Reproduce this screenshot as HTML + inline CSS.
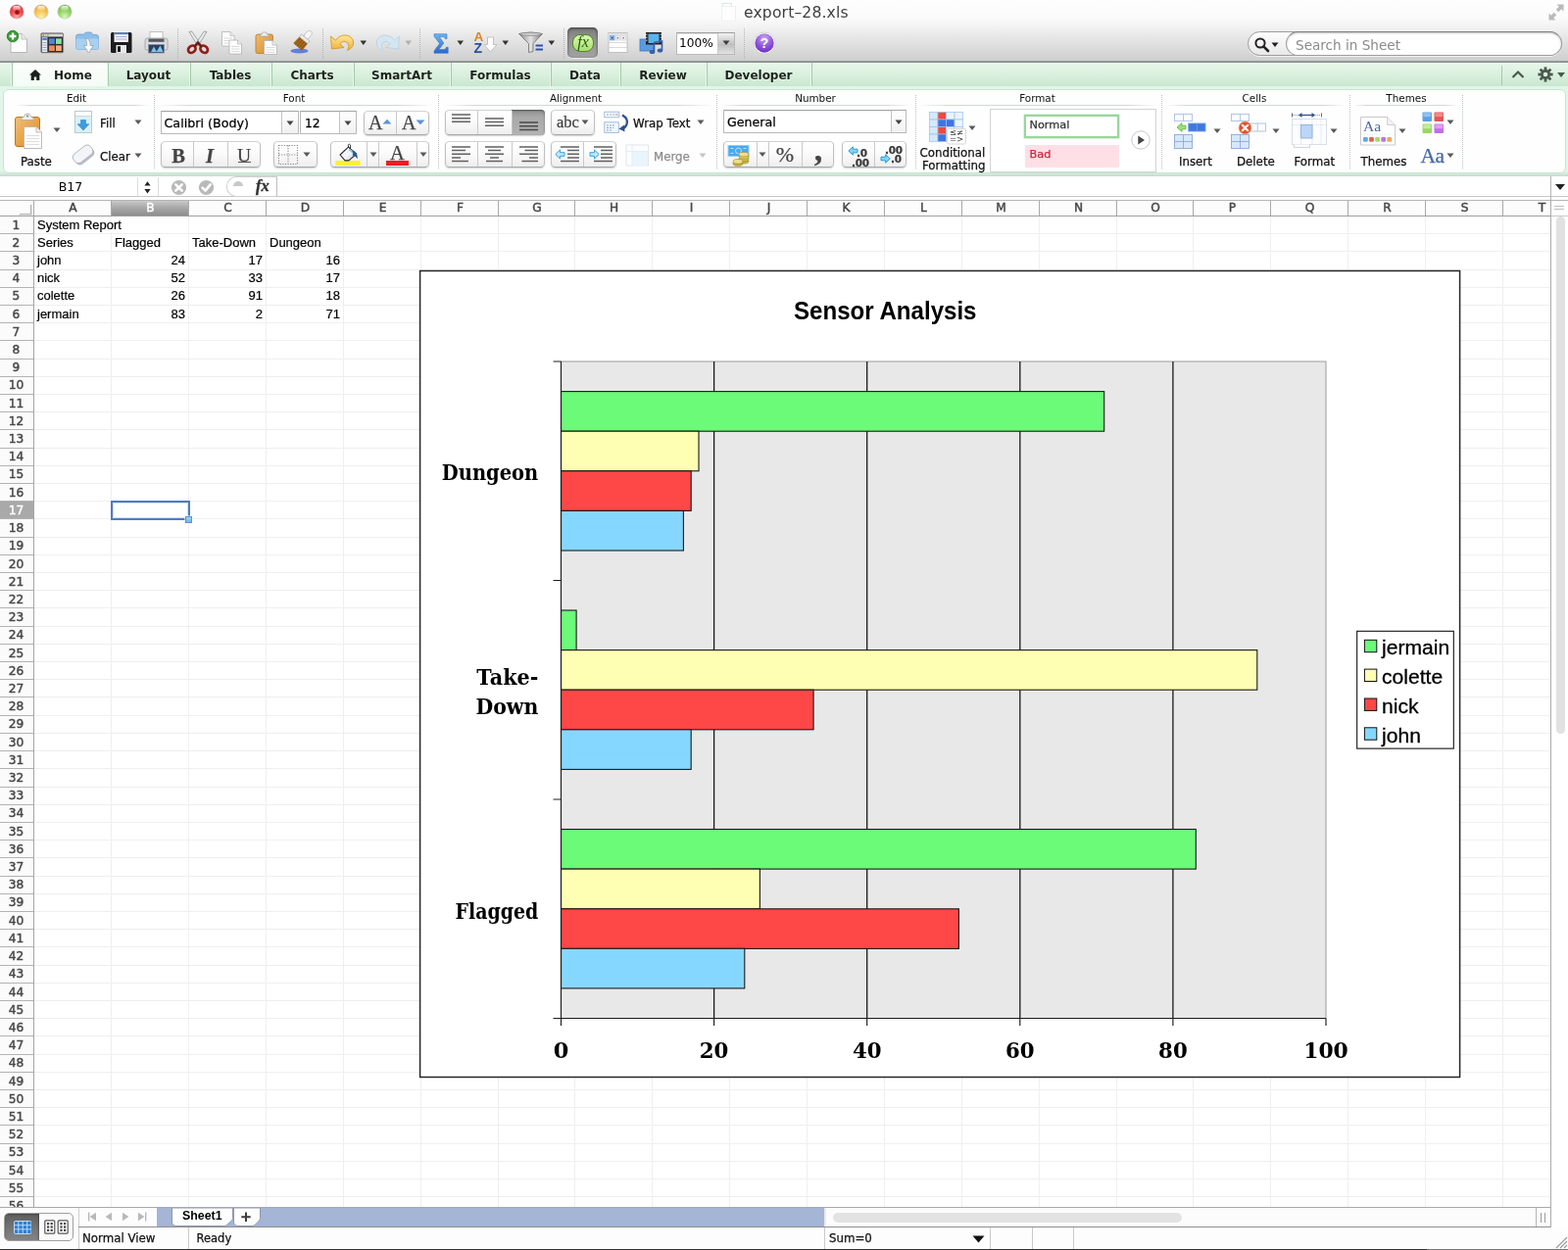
<!DOCTYPE html>
<html lang="en">
<head>
<meta charset="utf-8">
<title>export-28.xls</title>
<style>
html,body{margin:0;padding:0;}
body{width:1600px;height:1276px;position:relative;overflow:hidden;background:#fff;
  font-family:"DejaVu Sans","Liberation Sans",sans-serif;font-size:12px;color:#111;}
#app{left:0;top:0;width:1600px;height:1276px;overflow:hidden;background:#fff;will-change:transform;}
div,span,svg{position:absolute;box-sizing:border-box;}
.t{white-space:nowrap;line-height:1;}
/* title + toolbar */
#chrome{left:0;top:0;width:1600px;height:63px;
  background:linear-gradient(#fefefe 0px,#fbfbfb 18px,#f1f1f1 29px,#e5e5e5 40px,#dadada 51px,#cecece 62px);}
#chromeline{left:0;top:62px;width:1600px;height:2px;background:linear-gradient(#a3a3a3,#7f8a80);}
.tl{width:14px;height:14px;border-radius:7px;top:5px;}
/* tabs */
#tabs{left:0;top:64px;width:1600px;height:24px;background:linear-gradient(#e8f7ea,#daf0de 50%,#c9e7cf);}
.tab{top:0;height:24px;border-right:1px solid #a5c9ab;box-shadow:inset -1px 0 0 #e9f8ec;}
.tab .t{font-weight:bold;font-size:12px;color:#1a221a;top:7px;text-shadow:0 1px 0 rgba(255,255,255,.6);}
#ribbonbg{left:0;top:88px;width:1600px;height:92px;background:linear-gradient(#e2f5e9 0px,#e2f5e9 87px,#d3e9da 89.5px,#c6d9cc 92px);}
#ribbon{left:3px;top:91px;width:1595px;height:86px;background:#fdfefd;border:1px solid #c4e6d2;border-radius:6px;}
.gl{font-size:10.4px;color:#111;top:94.9px;}
.gsep{top:97px;width:0;height:75px;border-left:1px dotted #b9c4bc;}
.ghl{top:107px;height:1px;background:linear-gradient(90deg,rgba(200,205,200,0),#d4d8d4 12%,#d4d8d4 88%,rgba(200,205,200,0));}
.rl{-webkit-text-stroke:0.25px currentColor;margin-top:1px;}
.seg{border:1px solid #c0c0c0;border-top-color:#d2d2d2;border-bottom-color:#a9a9a9;border-radius:4.5px;background:linear-gradient(#ffffff,#fbfbfb 45%,#eeeeee);box-shadow:0 1px 1.5px rgba(0,0,0,.18);}
.combo{border:1px solid #b9b9b9;border-top-color:#a5a5a5;background:#fff;box-shadow:inset 0 1px 1px rgba(0,0,0,.08);}
/* formula bar */
#fbar{left:0;top:180px;width:1600px;height:24px;background:#fff;}
/* grid */
#colhdr{left:0;top:204px;width:1582px;height:17px;background:#fcfcfc;border-top:1px solid #b5b5b5;border-bottom:1px solid #9f9f9f;}
.ch{top:0;height:15px;border-right:1px solid #a9a9a9;}
.ch .t,.rh .t{font-size:12.2px;color:#484848;-webkit-text-stroke:0.45px #484848;}
#rowhdr{left:0;top:221px;width:35px;height:1012px;background:#fbfbfb;border-right:1px solid #a5a5a5;overflow:hidden;}
.rh{left:0;width:34px;border-bottom:1px solid #b3b3b3;}
#grid{left:35px;top:221px;width:1547px;height:1012px;overflow:hidden;background:#fff;}
.vl{top:0;width:1px;height:1012px;background:#efefef;}
.hl{left:0;width:1548px;height:1px;background:#efefef;}
.ch.sel{background:linear-gradient(#c9c9c9,#a9a9a9 45%,#8e8e8e);}
.ch.sel .t,.rh.sel .t{color:#fff;-webkit-text-stroke:0.4px #fff;}
.rh.sel{background:#a9a9a9;}
.c{font-family:"Liberation Sans",sans-serif;font-size:13px;color:#000;white-space:nowrap;line-height:1;-webkit-text-stroke:0.2px #000;}
</style>
</head>
<body>
<div id="app">
<div id="chrome"></div><div id="chromeline"></div>
<div class="tl" style="left:10px;background:radial-gradient(circle at 50% 85%,#ffb0a8 0%,#f0484e 45%,#c23a40 100%);box-shadow:0 0 0 0.5px rgba(0,0,0,.25),0 1px 1px rgba(255,255,255,.7)"><div style="left:3px;top:1px;width:8px;height:5px;border-radius:4px;background:linear-gradient(rgba(255,255,255,.85),rgba(255,255,255,.1))"></div></div>
<div class="tl" style="left:34.5px;background:radial-gradient(circle at 50% 85%,#fff0b0 0%,#f7c452 45%,#cf9a3a 100%);box-shadow:0 0 0 0.5px rgba(0,0,0,.25),0 1px 1px rgba(255,255,255,.7)"><div style="left:3px;top:1px;width:8px;height:5px;border-radius:4px;background:linear-gradient(rgba(255,255,255,.85),rgba(255,255,255,.1))"></div></div>
<div class="tl" style="left:59px;background:radial-gradient(circle at 50% 85%,#dcf6bc 0%,#93d465 45%,#6aa848 100%);box-shadow:0 0 0 0.5px rgba(0,0,0,.25),0 1px 1px rgba(255,255,255,.7)"><div style="left:3px;top:1px;width:8px;height:5px;border-radius:4px;background:linear-gradient(rgba(255,255,255,.85),rgba(255,255,255,.1))"></div></div>
<div style="left:14.5px;top:9.5px;width:5px;height:5px;border-radius:3px;background:radial-gradient(#8a0a10,#d0262c)"></div>
<div style="left:737px;top:3px;width:10px;height:3px;border:1px solid #d3efd6;border-bottom:0"></div>
<div style="left:736px;top:6px;width:15px;height:16px;background:#fdfdfd;border:1px solid #f0f0f0"></div>
<span class="t" style="left:759px;top:5.5px;font-size:15.6px;color:#3e3e3e;letter-spacing:0.15px">export–28.xls</span>
<svg style="left:1579px;top:3px" width="18" height="19" viewBox="0 0 18 19"><g fill="#b9b9b9"><path d="M9.5 1.5h7v7l-2.3-2.3-3 3-2.4-2.4 3-3z"/><path d="M8.5 17.5h-7v-7l2.3 2.3 3-3 2.4 2.4-3 3z"/></g></svg>
<div id="tabs">
<div class="tab" style="left:0;width:13px"></div>
<div class="tab" style="left:13px;width:98px;height:27px;background:linear-gradient(#fbfefb,#f4fbf5);border-right:1px solid #a9cdb0"><svg style="left:17px;top:7px" width="12" height="11" viewBox="0 0 12 11"><path d="M6 0 L12 5.6 H10.3 V11 H7.2 V7.4 H4.8 V11 H1.7 V5.6 H0 Z" fill="#1c211c"/></svg><span class="t" style="left:42px">Home</span></div>
<div class="tab" style="left:111px;width:84px"><span class="t" style="left:-1px;width:83px;text-align:center">Layout</span></div>
<div class="tab" style="left:195px;width:83px"><span class="t" style="left:-1px;width:82px;text-align:center">Tables</span></div>
<div class="tab" style="left:278px;width:84px"><span class="t" style="left:-1px;width:83px;text-align:center">Charts</span></div>
<div class="tab" style="left:362px;width:99px"><span class="t" style="left:-1px;width:98px;text-align:center">SmartArt</span></div>
<div class="tab" style="left:461px;width:102px"><span class="t" style="left:-1px;width:101px;text-align:center">Formulas</span></div>
<div class="tab" style="left:563px;width:71px"><span class="t" style="left:-1px;width:70px;text-align:center">Data</span></div>
<div class="tab" style="left:634px;width:88px"><span class="t" style="left:-1px;width:87px;text-align:center">Review</span></div>
<div class="tab" style="left:722px;width:107px"><span class="t" style="left:-1px;width:106px;text-align:center">Developer</span></div>
<div style="left:1532px;top:3px;width:1px;height:20px;background:#a5c9ab"></div>
<svg style="left:1542px;top:7px" width="14" height="10" viewBox="0 0 14 10"><path d="M1.5 8 L7 2.5 L12.5 8" fill="none" stroke="#4b5a4d" stroke-width="2.2"/></svg>
<svg style="left:1569px;top:4px" width="16" height="16" viewBox="-8 -8 16 16"><g fill="#4b5a4d"><circle r="5"/><rect x="-1.4" y="-7.6" width="2.8" height="4" transform="rotate(0)"/><rect x="-1.4" y="-7.6" width="2.8" height="4" transform="rotate(45)"/><rect x="-1.4" y="-7.6" width="2.8" height="4" transform="rotate(90)"/><rect x="-1.4" y="-7.6" width="2.8" height="4" transform="rotate(135)"/><rect x="-1.4" y="-7.6" width="2.8" height="4" transform="rotate(180)"/><rect x="-1.4" y="-7.6" width="2.8" height="4" transform="rotate(225)"/><rect x="-1.4" y="-7.6" width="2.8" height="4" transform="rotate(270)"/><rect x="-1.4" y="-7.6" width="2.8" height="4" transform="rotate(315)"/></g><circle r="2.3" fill="#d9efdc"/></svg>
<svg style="left:1589px;top:10px" width="8" height="5" viewBox="0 0 8 5"><path d="M0 0H8L4 5Z" fill="#4b5a4d"/></svg>
</div>
<div id="ribbonbg"></div><div id="ribbon"></div>
<span class="t gl" style="left:28px;width:100px;text-align:center">Edit</span>
<div class="gsep" style="left:157px"></div>
<div class="ghl" style="left:16px;width:137px"></div>
<span class="t gl" style="left:250px;width:100px;text-align:center">Font</span>
<div class="gsep" style="left:447px"></div>
<div class="ghl" style="left:161px;width:282px"></div>
<span class="t gl" style="left:537.5px;width:100px;text-align:center">Alignment</span>
<div class="gsep" style="left:731px"></div>
<div class="ghl" style="left:451px;width:276px"></div>
<span class="t gl" style="left:782px;width:100px;text-align:center">Number</span>
<div class="gsep" style="left:934px"></div>
<div class="ghl" style="left:735px;width:195px"></div>
<span class="t gl" style="left:1008.5px;width:100px;text-align:center">Format</span>
<div class="gsep" style="left:1185px"></div>
<div class="ghl" style="left:938px;width:243px"></div>
<span class="t gl" style="left:1230px;width:100px;text-align:center">Cells</span>
<div class="gsep" style="left:1377px"></div>
<div class="ghl" style="left:1189px;width:184px"></div>
<span class="t gl" style="left:1385px;width:100px;text-align:center">Themes</span>
<div class="gsep" style="left:1492px"></div>
<div class="ghl" style="left:1381px;width:107px"></div>

<svg style="left:6px;top:30px" width="24" height="26" viewBox="0 0 24 26"><path d="M5 4.5H16L21.5 10V23.5H5Z" fill="#fdfdfd" stroke="#b0b0b0" stroke-width="0.9"/><path d="M16 4.5V10H21.5" fill="#eaeaea" stroke="#b0b0b0" stroke-width="0.8"/>
<circle cx="7" cy="7" r="5.8" fill="#3a9a34" stroke="#2a7a26" stroke-width="0.8"/><path d="M7 3.6V10.4M3.6 7H10.4" stroke="#fff" stroke-width="2.3"/></svg>
<svg style="left:41px;top:33px" width="25" height="22" viewBox="0 0 25 22"><rect x="0.8" y="0.8" width="22.8" height="20" rx="1" fill="#2f2f33" stroke="#8a8a8a" stroke-width="0.8"/><rect x="1.5" y="1.5" width="21.5" height="3" fill="#d9d9d9"/>
<circle cx="3.3" cy="3" r="0.8" fill="#e0443a"/><circle cx="5.6" cy="3" r="0.8" fill="#e8b02c"/><circle cx="7.9" cy="3" r="0.8" fill="#4fb53c"/>
<rect x="1.8" y="5" width="5.5" height="15" fill="#e9edf5"/><rect x="2.3" y="5.5" width="4.5" height="2.6" fill="#4a7fd0"/><path d="M2.5 10.5h4M2.5 13h4M2.5 15.5h4M2.5 18h4" stroke="#9aa3b5" stroke-width="1"/>
<rect x="9" y="6.3" width="5.8" height="5.6" fill="#4f86d8"/><rect x="16" y="6.3" width="5.8" height="5.6" fill="#8ee0a0"/><rect x="9" y="13.4" width="5.8" height="5.6" fill="#f08a5a"/><rect x="16" y="13.4" width="5.8" height="5.6" fill="#f6b07a"/></svg>
<svg style="left:76px;top:32px" width="26" height="24" viewBox="0 0 26 24"><path d="M1.5 5.5Q1.5 3 4 3H9.5L11.5 1H17L19 3.5H22Q24.5 3.5 24.5 6V16.5Q24.5 18.5 22.5 18.5H3.5Q1.5 18.5 1.5 16.5Z" fill="#8fbfe8" stroke="#6fa0cf" stroke-width="0.8"/>
<path d="M1.5 7.5H24.5V16.5Q24.5 18.5 22.5 18.5H3.5Q1.5 18.5 1.5 16.5Z" fill="#a9d0f0"/>
<path d="M11 7Q16.5 8 16 14.5H19.3L14.5 22L9.5 14.5H12.6Q13 10 11 7Z" fill="#fdfdfd" stroke="#8a9aa8" stroke-width="0.7"/></svg>
<svg style="left:112px;top:32px" width="24" height="23" viewBox="0 0 24 23"><path d="M1 2.5Q1 1 2.5 1H21Q22.5 1 22.5 2.5V20.5Q22.5 22 21 22H2.5Q1 22 1 20.5Z" fill="#1c1c1e"/>
<rect x="4.5" y="1" width="14.5" height="10" fill="#f3f5f8"/><rect x="4.5" y="1" width="14.5" height="2.2" fill="#5c7fc0"/><path d="M6 5.5H17.5M6 8H17.5" stroke="#9fb0c8" stroke-width="1.1"/>
<rect x="6.5" y="14" width="10.5" height="8" fill="#e8e8ea"/><rect x="8" y="15.2" width="3" height="5.8" fill="#1c1c1e"/></svg>
<svg style="left:146px;top:31px" width="27" height="25" viewBox="0 0 27 25"><rect x="7" y="1.5" width="13" height="8" fill="#fdfdfd" stroke="#b5b5b5" stroke-width="0.8"/>
<path d="M2 10.5Q2 8 4.5 8H22.5Q25 8 25 10.5V18.5Q25 20 23.5 20H3.5Q2 20 2 18.5Z" fill="#d9dcde" stroke="#9a9d9f" stroke-width="0.8"/>
<rect x="5.5" y="8.6" width="16" height="3.2" fill="#55585c"/><rect x="5.5" y="14.5" width="16" height="8.5" fill="#2c3f66" stroke="#8c8f94" stroke-width="0.8"/><path d="M8 22L11 16.5L14 22M13.5 22L17.5 15.5L20.5 22" fill="#7ec6e8"/></svg>
<div style="left:181px;top:29px;width:0;height:31px;border-left:1px dotted #b3b3b3"></div>
<svg style="left:189px;top:31px" width="26" height="25" viewBox="0 0 26 25"><path d="M4 1.5L6.8 1L15.8 14.5L13 16Z M22 1.5L19.2 1L10.2 14.5L13 16Z" fill="#e9ebee" stroke="#8f9296" stroke-width="0.8" stroke-linejoin="round"/>
<ellipse cx="6.8" cy="19.3" rx="4.1" ry="3.3" fill="none" stroke="#8f1f18" stroke-width="2.7" transform="rotate(-40 6.8 19.3)"/><ellipse cx="19.2" cy="19.3" rx="4.1" ry="3.3" fill="none" stroke="#8f1f18" stroke-width="2.7" transform="rotate(40 19.2 19.3)"/>
<path d="M9.5 16.5L13 12.5L16.5 16.5" fill="none" stroke="#6e1812" stroke-width="2.4"/></svg>
<svg style="left:225px;top:31px" width="24" height="25" viewBox="0 0 24 25"><path d="M1.5 1.5H10L14 5.5V16H1.5Z" fill="#fdfdfd" stroke="#b3b3b3" stroke-width="0.8"/><path d="M10 1.5V5.5H14" fill="#ececec" stroke="#b3b3b3" stroke-width="0.7"/><path d="M3.5 8H12M3.5 10.5H12M3.5 13H12" stroke="#d6d6d6" stroke-width="0.9"/>
<path d="M9 10H17.5L21.5 14V24H9Z" fill="#fdfdfd" stroke="#b3b3b3" stroke-width="0.8"/><path d="M17.5 10V14H21.5" fill="#ececec" stroke="#b3b3b3" stroke-width="0.7"/><path d="M11 16.5H19.5M11 19H19.5M11 21.5H19.5" stroke="#d6d6d6" stroke-width="0.9"/></svg>
<svg style="left:260px;top:32px" width="24" height="24" viewBox="0 0 24 24"><defs><linearGradient id="tp1" x1="0" y1="0" x2="1" y2="1"><stop offset="0" stop-color="#f0bd78"/><stop offset="1" stop-color="#d48a22"/></linearGradient></defs>
<rect x="1" y="3" width="17.5" height="19.5" rx="2" fill="url(#tp1)" stroke="#b37a26" stroke-width="0.8"/><path d="M5 5Q5 3 7 3L7.7 1.3Q9.8 0.3 12 1.3L12.5 3Q14.5 3 14.5 5Z" fill="#eee" stroke="#a5a5a5" stroke-width="0.7"/>
<path d="M9.5 9.5H18L22.5 14V23.5H9.5Z" fill="#fdfdfd" stroke="#b3b3b3" stroke-width="0.8"/><path d="M18 9.5V14H22.5" fill="#ececec" stroke="#b3b3b3" stroke-width="0.7"/><path d="M11.5 16.5H20.5M11.5 19H20.5M11.5 21.5H20.5" stroke="#d6d6d6" stroke-width="0.9"/></svg>
<svg style="left:294px;top:31px" width="27" height="25" viewBox="0 0 27 25"><ellipse cx="11.5" cy="21" rx="9" ry="2.6" fill="#4a6fe0" opacity="0.85"/>
<g transform="rotate(40 14 12)"><rect x="11.2" y="-2.5" width="5.6" height="9" rx="2.6" fill="#f6f6f6" stroke="#b5b5b5" stroke-width="0.7"/><rect x="8.5" y="6" width="11" height="3.6" fill="#e9e9e9" stroke="#a9a9a9" stroke-width="0.6"/><path d="M8.5 9.6H19.5L20 18.5H8Z" fill="#a86a1c"/><path d="M10.5 9.6V18.5M13 9.6V18.5M15.5 9.6V18.5M18 9.6V18.5" stroke="#6e430f" stroke-width="0.7"/></g></svg>
<div style="left:329px;top:29px;width:0;height:31px;border-left:1px dotted #b3b3b3"></div>
<svg style="left:336px;top:34px" width="27" height="20" viewBox="0 0 27 20"><defs><linearGradient id="un1" x1="0" y1="0" x2="0" y2="1"><stop offset="0" stop-color="#ffe9a0"/><stop offset="1" stop-color="#f0b030"/></linearGradient></defs>
<path d="M1.5 3L2.5 16L15 14.5L10.8 11Q14 6.5 18.5 9.5Q21.5 12.5 18.5 17.5Q25.5 14.5 24.5 8Q22.5 1.5 15 2Q9.5 2.5 6.5 7.2Z" fill="url(#un1)" stroke="#d19a2a" stroke-width="0.9" stroke-linejoin="round"/></svg>
<svg style="left:367.2px;top:41.0px" width="7.5" height="5.5" viewBox="0 0 7.5 5.5"><path d="M0.5 0.5H7.0L3.75 5.0Z" fill="#333"/></svg>
<svg style="left:382px;top:34px" width="27" height="20" viewBox="0 0 27 20"><path d="M25.5 3L24.5 16L12 14.5L16.2 11Q13 6.5 8.5 9.5Q5.5 12.5 8.5 17.5Q1.5 14.5 2.5 8Q4.5 1.5 12 2Q17.5 2.5 20.5 7.2Z" fill="#d5e6f2" stroke="#b9d2e4" stroke-width="0.9" stroke-linejoin="round"/></svg>
<svg style="left:413.2px;top:41.0px" width="7.5" height="5.5" viewBox="0 0 7.5 5.5"><path d="M0.5 0.5H7.0L3.75 5.0Z" fill="#b0b0b0"/></svg>
<div style="left:428px;top:29px;width:0;height:31px;border-left:1px dotted #b3b3b3"></div>
<svg style="left:442px;top:33.5px" width="16" height="21" viewBox="0 0 16 21"><defs><linearGradient id="sg1" x1="0" y1="0" x2="0" y2="1"><stop offset="0" stop-color="#6fb7f4"/><stop offset="1" stop-color="#2a68c8"/></linearGradient></defs>
<path d="M1 0.8H14V5.5H12.3Q12 3.6 10.3 3.6H6.3L10.8 10L5.8 16.6H11Q13 16.6 13.5 14.2H15.2V20.2H1V18L6.6 10.5L1 3Z" fill="url(#sg1)" stroke="#2f6fc4" stroke-width="0.6"/></svg>
<svg style="left:466.2px;top:41.0px" width="7.5" height="5.5" viewBox="0 0 7.5 5.5"><path d="M0.5 0.5H7.0L3.75 5.0Z" fill="#333"/></svg>
<svg style="left:482px;top:31px" width="28" height="25" viewBox="0 0 28 25"><text x="1.5" y="10.5" font-family="'Liberation Sans',sans-serif" font-weight="bold" font-size="13.5" fill="#d6822a">A</text><text x="1.5" y="23" font-family="'Liberation Sans',sans-serif" font-weight="bold" font-size="14" fill="#2a4f9c">Z</text>
<path d="M15.5 7H21.5V14.5H25L18.5 22L12 14.5H15.5Z" fill="#fdfdfd" stroke="#b5b5b5" stroke-width="0.8"/></svg>
<svg style="left:512.2px;top:41.0px" width="7.5" height="5.5" viewBox="0 0 7.5 5.5"><path d="M0.5 0.5H7.0L3.75 5.0Z" fill="#333"/></svg>
<svg style="left:528px;top:32px" width="28" height="24" viewBox="0 0 28 24"><defs><linearGradient id="fl1" x1="0" y1="0" x2="1" y2="0"><stop offset="0" stop-color="#8a8a8a"/><stop offset="0.5" stop-color="#e4e4e4"/><stop offset="1" stop-color="#7a7a7a"/></linearGradient></defs>
<path d="M1.5 2.5Q13.5 -0.5 25.5 2.5L16 12.5V20.5L11.5 21.5V12.5Z" fill="url(#fl1)" stroke="#6e6e6e" stroke-width="0.8"/><ellipse cx="13.5" cy="2.8" rx="11" ry="1.6" fill="#cfcfcf" stroke="#777" stroke-width="0.6"/>
<path d="M18.5 14.6H26M18.5 18.4H26" stroke="#2f4fb8" stroke-width="2"/></svg>
<svg style="left:559.2px;top:41.0px" width="7.5" height="5.5" viewBox="0 0 7.5 5.5"><path d="M0.5 0.5H7.0L3.75 5.0Z" fill="#333"/></svg>
<div style="left:575px;top:29px;width:0;height:31px;border-left:1px dotted #b3b3b3"></div>
<div style="left:579px;top:28px;width:31px;height:31px;border-radius:5px;background:linear-gradient(#7b7b7b,#939393 40%,#a3a3a3);box-shadow:inset 0 1px 3px rgba(0,0,0,.55),0 1px 0 rgba(255,255,255,.5)"></div>
<div style="left:584px;top:34.5px;width:22px;height:18.5px;border-radius:8px;background:linear-gradient(#d9f6b0,#a8e06a);border:1px solid #4f8a2c"></div>
<span class="t" style="left:584px;width:22px;text-align:center;top:35px;font-family:'Liberation Serif',serif;font-style:italic;font-size:16px;color:#1f5a14">fx</span>
<svg style="left:620px;top:32px" width="22" height="23" viewBox="0 0 22 23"><rect x="1" y="1.5" width="19" height="20" fill="#fdfdfd" stroke="#b5b5b5" stroke-width="0.8"/><rect x="1.5" y="2" width="18" height="2" fill="#e2e2e2"/><rect x="2.5" y="4.5" width="4.5" height="4.5" fill="#7fb0e8" stroke="#5a8fd0" stroke-width="0.5"/><rect x="8.2" y="4.5" width="4.5" height="4.5" fill="#f4f4f4" stroke="#bbb" stroke-width="0.5"/><rect x="13.9" y="4.5" width="4.5" height="4.5" fill="#f4f4f4" stroke="#bbb" stroke-width="0.5"/>
<circle cx="4.7" cy="6.8" r="0.8" fill="#234"/><circle cx="10.4" cy="6.8" r="0.8" fill="#555"/><circle cx="16.1" cy="6.8" r="0.8" fill="#555"/><path d="M1 11.5H20M1 16.5H20" stroke="#cfcfcf" stroke-width="0.8"/></svg>
<svg style="left:651px;top:31px" width="28" height="26" viewBox="0 0 28 26"><rect x="2" y="9" width="14" height="12" fill="#5a9ae0" stroke="#3f78c0" stroke-width="0.8"/><rect x="8" y="2" width="16" height="12.5" fill="#1d1f24"/><rect x="10.5" y="3.5" width="11" height="9.5" fill="#5ab4ec"/><path d="M8.8 3.5v1.6M8.8 6.5v1.6M8.8 9.5v1.6M23.2 3.5v1.6M23.2 6.5v1.6M23.2 9.5v1.6" stroke="#ddd" stroke-width="1"/>
<path d="M16.5 21.5V12.5L24.5 11V20" fill="none" stroke="#3a5fa8" stroke-width="1.6"/><ellipse cx="14.5" cy="22" rx="2.8" ry="2.1" fill="#3a5fa8"/><ellipse cx="22.5" cy="20.5" rx="2.8" ry="2.1" fill="#3a5fa8"/></svg>
<div style="left:690px;top:33px;width:60px;height:22.5px;background:#fff;border:1px solid #b9b9b9;border-top-color:#9f9f9f;box-shadow:inset 0 1px 1px rgba(0,0,0,.12)"><div style="left:41px;top:0;width:17px;height:20.5px;background:linear-gradient(#f2f2f2,#bfbfbf 55%,#e2e2e2);border-left:1px solid #c9c9c9"></div></div>
<span class="t" style="left:693px;top:38px;font-size:12.2px;color:#000">100%</span>
<svg style="left:737.0px;top:40.8px" width="8" height="5.5" viewBox="0 0 8 5.5"><path d="M0.5 0.5H7.5L4.0 5.0Z" fill="#3c3c3c"/></svg>
<div style="left:759px;top:29px;width:0;height:31px;border-left:1px dotted #b3b3b3"></div>
<svg style="left:768px;top:32px" width="24" height="24" viewBox="0 0 24 24"><defs><radialGradient id="hp1" cx="0.5" cy="0.25" r="0.8"><stop offset="0" stop-color="#c9a6f2"/><stop offset="0.6" stop-color="#8a4fd8"/><stop offset="1" stop-color="#6a2fc0"/></radialGradient></defs>
<circle cx="12" cy="12" r="11" fill="#fdfdfd" stroke="#c9c9c9" stroke-width="0.7"/><circle cx="12" cy="12" r="9.7" fill="url(#hp1)"/><text x="12" y="17" text-anchor="middle" font-family="'Liberation Sans',sans-serif" font-weight="bold" font-size="14.5" fill="#fff">?</text></svg>
<div style="left:1273px;top:32px;width:321px;height:25px;border-radius:12.5px;border:1px solid #9c9c9c;background:linear-gradient(#fdfdfd,#e9e9e9);box-shadow:0 1px 0 rgba(255,255,255,.7)"></div>
<div style="left:1312px;top:32px;width:282px;height:25px;border-radius:12.5px;border:1px solid #9c9c9c;border-top-color:#7f7f7f;background:#fff;box-shadow:inset 0 1px 2px rgba(0,0,0,.25)"></div>
<svg style="left:1279px;top:36.7px" width="18" height="17" viewBox="0 0 18 17"><circle cx="7" cy="7" r="4.6" fill="none" stroke="#222" stroke-width="2"/><path d="M10.3 10.3L15 15" stroke="#222" stroke-width="2.6" stroke-linecap="round"/></svg>
<svg style="left:1296.5px;top:42.8px" width="8" height="5.5" viewBox="0 0 8 5.5"><path d="M0.5 0.5H7.5L4.0 5.0Z" fill="#222"/></svg>
<span class="t" style="left:1322px;top:39.5px;font-size:13.6px;color:#8a8a8a">Search in Sheet</span>
<svg style="left:14px;top:115px" width="32" height="38" viewBox="0 0 32 38"><defs><linearGradient id="pg1" x1="0" y1="0" x2="1" y2="1"><stop offset="0" stop-color="#f3c07a"/><stop offset="1" stop-color="#d98a1c"/></linearGradient></defs>
<rect x="1.5" y="4.5" width="25" height="30" rx="2.5" fill="url(#pg1)" stroke="#b9781f" stroke-width="1"/>
<path d="M7.5 7.5Q7.5 4.5 10.5 4.2L11.5 1.8Q14 0.3 16.5 1.8L17.5 4.2Q20.5 4.5 20.5 7.5Z" fill="#efefef" stroke="#a8a8a8" stroke-width="0.8"/>
<circle cx="14" cy="3.6" r="1" fill="#777"/>
<path d="M10.5 14.5H23L28.5 20V36.5H10.5Z" fill="#fdfdfd" stroke="#b5b5b5" stroke-width="0.9"/>
<path d="M23 14.5V20H28.5" fill="#ececec" stroke="#b5b5b5" stroke-width="0.8"/>
<path d="M13 23.5H26M13 26.5H26M13 29.5H26M13 32.5H26" stroke="#d9d9d9" stroke-width="0.9"/></svg>
<svg style="left:53.5px;top:130.4px" width="8" height="5.5" viewBox="0 0 8 5.5"><path d="M0.5 0.5H7.5L4.0 5.0Z" fill="#5a5a5a"/></svg>
<span class="t rl" style="left:21px;top:159px;font-size:11.8px;color:#111;">Paste</span>
<svg style="left:75px;top:113px" width="20" height="23" viewBox="0 0 20 23"><rect x="1.5" y="0.5" width="17" height="22" fill="#d9f0fb" stroke="#b9c9d3" stroke-width="1"/>
<rect x="2" y="1" width="16" height="4.5" fill="#fff"/><path d="M1.5 5.5H18.5" stroke="#c5d0d6" stroke-width="0.8"/>
<path d="M7.5 9.5h5v4.2h3.3L10 20 4.2 13.7h3.3z" fill="#3d9be0" stroke="#2b83c8" stroke-width="0.6"/></svg>
<span class="t rl" style="left:102px;top:120px;font-size:11.8px;color:#111;">Fill</span>
<svg style="left:136.5px;top:122.2px" width="8" height="5.5" viewBox="0 0 8 5.5"><path d="M0.5 0.5H7.5L4.0 5.0Z" fill="#5a5a5a"/></svg>
<svg style="left:73px;top:147px" width="25" height="23" viewBox="0 0 25 23"><g transform="rotate(-38 12.5 11.5)"><rect x="1.5" y="6" width="22" height="12" rx="4.5" fill="#b9bcc8"/><rect x="1.5" y="4.5" width="22" height="11" rx="4.5" fill="#f3f4f8" stroke="#a7abb8" stroke-width="0.8"/></g></svg>
<span class="t rl" style="left:102px;top:154px;font-size:11.8px;color:#111;">Clear</span>
<svg style="left:136.5px;top:156.2px" width="8" height="5.5" viewBox="0 0 8 5.5"><path d="M0.5 0.5H7.5L4.0 5.0Z" fill="#5a5a5a"/></svg>
<div class="combo" style="left:164px;top:113px;width:141px;height:24px"><div style="left:122px;top:0;width:17px;height:22px;border-left:1px solid #c3c3c3;background:linear-gradient(#fefefe,#f1f1f1)"></div></div>
<span class="t rl" style="left:167.5px;top:119px;font-size:12.7px;color:#000;">Calibri (Body)</span>
<svg style="left:292.0px;top:122.8px" width="8" height="5.5" viewBox="0 0 8 5.5"><path d="M0.5 0.5H7.5L4.0 5.0Z" fill="#444"/></svg>
<div class="combo" style="left:306px;top:113px;width:58px;height:24px"><div style="left:39px;top:0;width:17px;height:22px;border-left:1px solid #c3c3c3;background:linear-gradient(#fefefe,#f1f1f1)"></div></div>
<span class="t rl" style="left:311px;top:119px;font-size:12.3px;color:#000;">12</span>
<svg style="left:351.0px;top:122.8px" width="8" height="5.5" viewBox="0 0 8 5.5"><path d="M0.5 0.5H7.5L4.0 5.0Z" fill="#444"/></svg>
<div class="seg" style="left:370.5px;top:113px;width:67.0px;height:25px">
<div style="left:32.0px;top:0;width:1px;height:23px;background:#c9c9c9"></div>
</div>
<span class="t rl" style="left:376px;top:114px;font-size:20px;color:#444;font-family:'Liberation Serif',serif">A</span>
<span class="t rl" style="left:410px;top:114px;font-size:20px;color:#444;font-family:'Liberation Serif',serif">A</span>
<svg style="left:390px;top:121px" width="10" height="6" viewBox="0 0 10 6"><path d="M0.5 5.5L5 0.8L9.5 5.5Z" fill="#5b93d8"/></svg>
<svg style="left:424px;top:122px" width="10" height="6" viewBox="0 0 10 6"><path d="M0.5 0.5L5 5.2L9.5 0.5Z" fill="#5b93d8"/></svg>
<div class="seg" style="left:164px;top:144px;width:102px;height:27px">
<div style="left:32px;top:0;width:1px;height:25px;background:#c9c9c9"></div>
<div style="left:67px;top:0;width:1px;height:25px;background:#c9c9c9"></div>
</div>
<span class="t rl" style="left:172px;top:147.5px;font-size:20.5px;color:#444;font-family:'Liberation Serif',serif;font-weight:bold;width:20px;text-align:center">B</span>
<span class="t rl" style="left:204px;top:147.5px;font-size:20.5px;color:#444;font-family:'Liberation Serif',serif;font-weight:bold;font-style:italic;width:20px;text-align:center">I</span>
<span class="t rl" style="left:239px;top:147.5px;font-size:19.5px;color:#444;font-family:'Liberation Serif',serif;width:20px;text-align:center">U</span>
<div style="left:242.5px;top:164.6px;width:13px;height:1.3px;background:#555"></div>
<div class="seg" style="left:279px;top:144px;width:45px;height:27px">
</div>
<svg style="left:283px;top:147px" width="22" height="22" viewBox="0 0 22 22"><path d="M1.5 1.5H20.5V20.5H1.5ZM11 1.5V20.5M1.5 11H20.5" fill="none" stroke="#8a8a8a" stroke-width="1.1" stroke-dasharray="1.2 1.4"/></svg>
<svg style="left:308.5px;top:155.1px" width="8" height="5.5" viewBox="0 0 8 5.5"><path d="M0.5 0.5H7.5L4.0 5.0Z" fill="#5a5a5a"/></svg>
<div class="seg" style="left:336.5px;top:144px;width:101.0px;height:27px">
<div style="left:36.5px;top:0;width:1px;height:25px;background:#c9c9c9"></div>
<div style="left:48.5px;top:0;width:1px;height:25px;background:#c9c9c9"></div>
<div style="left:87.5px;top:0;width:1px;height:25px;background:#c9c9c9"></div>
</div>
<svg style="left:341.5px;top:146px" width="26" height="24" viewBox="0 0 26 24"><defs><linearGradient id="bk1" x1="0" y1="0" x2="1" y2="1"><stop offset="0" stop-color="#ffffff"/><stop offset="0.6" stop-color="#eef1f4"/><stop offset="1" stop-color="#9aa6b2"/></linearGradient></defs>
<rect x="0.4" y="18" width="25.3" height="5" fill="#f9f03a"/>
<path d="M5 12L13.5 4.2L21.7 11.1L14 17.9H10Z" fill="url(#bk1)" stroke="#2a2a2a" stroke-width="1.1" stroke-linejoin="round"/>
<path d="M13.8 5Q12.3 1.2 14.3 1.2Q16.2 1.4 15.4 6" fill="none" stroke="#2a2a2a" stroke-width="1"/>
<path d="M14.6 6.2Q18 6.8 18.6 9.2L17.6 10.8Q15.6 8.2 13.2 7.6Z" fill="#8ec4e6"/>
<path d="M17 7.2Q23.2 8.6 22.8 16.2Q21 13 17.8 12.4Q19 10 17 7.2Z" fill="#27598f"/></svg>
<svg style="left:376.5px;top:155.1px" width="8" height="5.5" viewBox="0 0 8 5.5"><path d="M0.5 0.5H7.5L4.0 5.0Z" fill="#5a5a5a"/></svg>
<span class="t rl" style="left:397px;top:145px;font-size:20.5px;color:#444;font-family:'Liberation Serif',serif;width:17px;text-align:center">A</span>
<div style="left:394px;top:164px;width:23px;height:5.3px;background:#ee1c25"></div>
<svg style="left:427.5px;top:155.1px" width="8" height="5.5" viewBox="0 0 8 5.5"><path d="M0.5 0.5H7.5L4.0 5.0Z" fill="#5a5a5a"/></svg>
<div class="seg" style="left:454px;top:112px;width:102px;height:26px">
<div style="left:67px;top:-1px;width:34px;height:26px;border-radius:0 4px 4px 0;background:linear-gradient(#8f8f8f,#a9a9a9 30%,#b3b3b3);box-shadow:inset 0 1px 2px rgba(0,0,0,.45)"></div>
<div style="left:32px;top:0;width:1px;height:24px;background:#c9c9c9"></div>
<div style="left:67px;top:0;width:1px;height:24px;background:#c9c9c9"></div>
</div>
<svg style="left:461px;top:115.3px" width="19" height="11.299999999999997" viewBox="0 0 19 11.299999999999997"><path d="M0 2.0H19M0 5.700000000000003H19M0 9.299999999999997H19" stroke="#606060" stroke-width="1.5" fill="none"/></svg>
<svg style="left:495px;top:119px" width="19" height="11.300000000000011" viewBox="0 0 19 11.300000000000011"><path d="M0 2H19M0 5.599999999999994H19M0 9.300000000000011H19" stroke="#606060" stroke-width="1.5" fill="none"/></svg>
<svg style="left:529.5px;top:122.6px" width="19.0" height="11.400000000000006" viewBox="0 0 19.0 11.400000000000006"><path d="M0.0 2.0H19.0M0.0 5.700000000000017H19.0M0.0 9.400000000000006H19.0" stroke="#4a4a4a" stroke-width="1.5" fill="none"/></svg>
<div class="seg" style="left:562px;top:112px;width:45px;height:26px">
</div>
<span class="t rl" style="left:568px;top:116px;font-size:16.5px;color:#444;font-family:'Liberation Serif',serif">abc</span>
<svg style="left:593.0px;top:122.2px" width="8" height="5.5" viewBox="0 0 8 5.5"><path d="M0.5 0.5H7.5L4.0 5.0Z" fill="#5a5a5a"/></svg>
<div class="seg" style="left:454px;top:144px;width:102px;height:27px">
<div style="left:32px;top:0;width:1px;height:25px;background:#c9c9c9"></div>
<div style="left:67px;top:0;width:1px;height:25px;background:#c9c9c9"></div>
</div>
<svg style="left:461px;top:148px" width="19" height="18.599999999999994" viewBox="0 0 19 18.599999999999994"><path d="M0 2H19M0 5.599999999999994H14M0 9.300000000000011H19M0 13H9M0 16.599999999999994H17" stroke="#606060" stroke-width="1.5" fill="none"/></svg>
<svg style="left:495px;top:148px" width="19" height="18.599999999999994" viewBox="0 0 19 18.599999999999994"><path d="M0 2H19M3 5.599999999999994H16M0 9.300000000000011H19M5 13H14M1 16.599999999999994H18" stroke="#606060" stroke-width="1.5" fill="none"/></svg>
<svg style="left:529.5px;top:148px" width="19.0" height="18.599999999999994" viewBox="0 0 19.0 18.599999999999994"><path d="M0.0 2H19.0M5.5 5.599999999999994H19.0M0.0 9.300000000000011H19.0M10.0 13H19.0M2.5 16.599999999999994H19.0" stroke="#606060" stroke-width="1.5" fill="none"/></svg>
<div class="seg" style="left:562px;top:144px;width:67px;height:27px">
<div style="left:32px;top:0;width:1px;height:25px;background:#c9c9c9"></div>
</div>
<svg style="left:572px;top:148px" width="19" height="18.599999999999994" viewBox="0 0 19 18.599999999999994"><path d="M0 2H19M7 5.599999999999994H19M7 9.300000000000011H19M7 13H19M0 16.599999999999994H19" stroke="#606060" stroke-width="1.5" fill="none"/></svg>
<svg style="left:566px;top:152px" width="11" height="11" viewBox="0 0 11 11"><path d="M0.8 5.5L5.5 1V3.7H10V7.3H5.5V10Z" fill="#bfe9fb" stroke="#3aa0dc" stroke-width="1"/></svg>
<svg style="left:606px;top:148px" width="19" height="18.599999999999994" viewBox="0 0 19 18.599999999999994"><path d="M0 2H19M7 5.599999999999994H19M7 9.300000000000011H19M7 13H19M0 16.599999999999994H19" stroke="#606060" stroke-width="1.5" fill="none"/></svg>
<svg style="left:601px;top:152px" width="11" height="11" viewBox="0 0 11 11"><path d="M10.2 5.5L5.5 1V3.7H1V7.3H5.5V10Z" fill="#bfe9fb" stroke="#3aa0dc" stroke-width="1"/></svg>
<svg style="left:616px;top:113px" width="27" height="24" viewBox="0 0 27 24"><rect x="0.8" y="1.2" width="15" height="5.6" fill="#f6fbff" stroke="#9bb5d6" stroke-width="0.9"/><path d="M3 4H13" stroke="#8aa0c8" stroke-width="1" stroke-dasharray="2 1.2"/><path d="M12.5 4H14.5" stroke="#d66" stroke-width="1"/>
<rect x="0.8" y="11.8" width="14.5" height="10.6" fill="#f0f8ff" stroke="#9bb5d6" stroke-width="0.9"/><path d="M3 15H12M3 17.5H10M3 20H8" stroke="#8aa0c8" stroke-width="1" stroke-dasharray="2 1"/>
<path d="M19 4.5Q25.5 8 23.5 14Q22 17.5 19.5 18" fill="none" stroke="#2e4f8f" stroke-width="2.2"/><path d="M15.5 18.5L21 14.5L21.5 21.5Z" fill="#2e4f8f"/></svg>
<span class="t rl" style="left:646px;top:120px;font-size:11.8px;color:#111;">Wrap Text</span>
<svg style="left:710.5px;top:122.2px" width="8" height="5.5" viewBox="0 0 8 5.5"><path d="M0.5 0.5H7.5L4.0 5.0Z" fill="#5a5a5a"/></svg>
<svg style="left:638px;top:147px" width="25" height="23" viewBox="0 0 25 23"><rect x="1" y="1" width="22.5" height="21" fill="#fbfdff" stroke="#e2e6ea" stroke-width="1"/><rect x="7" y="7.5" width="16" height="14" fill="#e9f5fd"/><path d="M7 1V22M1 7.5H23.5" stroke="#e4e9ee" stroke-width="0.8"/></svg>
<span class="t rl" style="left:667px;top:154px;font-size:11.8px;color:#8c8c8c;">Merge</span>
<svg style="left:712.8px;top:156.2px" width="8" height="5.5" viewBox="0 0 8 5.5"><path d="M0.5 0.5H7.5L4.0 5.0Z" fill="#c4c4c4"/></svg>
<div class="combo" style="left:738px;top:112px;width:187px;height:24px"><div style="left:170px;top:0;width:15px;height:22px;border-left:1px solid #c3c3c3;background:linear-gradient(#fefefe,#f1f1f1)"></div></div>
<span class="t rl" style="left:742px;top:118px;font-size:12.6px;color:#000;">General</span>
<svg style="left:913.0px;top:121.8px" width="8" height="5.5" viewBox="0 0 8 5.5"><path d="M0.5 0.5H7.5L4.0 5.0Z" fill="#444"/></svg>
<div class="seg" style="left:738px;top:144px;width:113px;height:27px">
<div style="left:33px;top:0;width:1px;height:25px;background:#c9c9c9"></div>
<div style="left:45px;top:0;width:1px;height:25px;background:#c9c9c9"></div>
<div style="left:79px;top:0;width:1px;height:25px;background:#c9c9c9"></div>
</div>
<svg style="left:742px;top:147px" width="25" height="23" viewBox="0 0 25 23"><rect x="1" y="1.5" width="21" height="11" fill="#4aa8ee" stroke="#8fd0fb" stroke-width="1"/><circle cx="11.5" cy="7" r="3" fill="none" stroke="#bfe5ff" stroke-width="1"/><path d="M3.5 4.5h3M3.5 9.5h3M16.5 4.5h3M16.5 9.5h3" stroke="#bfe5ff" stroke-width="1"/>
<g stroke="#9a8420" stroke-width="0.6"><ellipse cx="17" cy="17.5" rx="5" ry="2.3" fill="#c9b13c"/><ellipse cx="17" cy="15.2" rx="5" ry="2.3" fill="#d8c24e"/><ellipse cx="17" cy="12.9" rx="5" ry="2.3" fill="#e0cc62"/><ellipse cx="17" cy="10.6" rx="5" ry="2.3" fill="#efe08a"/>
<ellipse cx="11" cy="20" rx="5" ry="2.3" fill="#c9b13c"/><ellipse cx="11" cy="17.8" rx="5" ry="2.3" fill="#efe08a"/></g></svg>
<svg style="left:774.0px;top:155.1px" width="8" height="5.5" viewBox="0 0 8 5.5"><path d="M0.5 0.5H7.5L4.0 5.0Z" fill="#5a5a5a"/></svg>
<span class="t rl" style="left:790px;top:146px;font-size:22px;color:#444;font-family:'Liberation Serif',serif;width:22px;text-align:center">%</span>
<span class="t rl" style="left:827px;top:135px;font-size:34px;color:#444;font-family:'Liberation Serif',serif;font-weight:bold;width:16px;text-align:center">,</span>
<div class="seg" style="left:859px;top:144px;width:66px;height:27px">
<div style="left:32px;top:0;width:1px;height:25px;background:#c9c9c9"></div>
</div>
<svg style="left:865px;top:149px" width="11" height="10" viewBox="0 0 11 10"><path d="M0.8 5L5.3 0.8V3.2H10V6.8H5.3V9.2Z" fill="#7fd4f7" stroke="#2b9adb" stroke-width="1"/></svg>
<span class="t rl" style="left:874px;top:150px;font-size:10.5px;color:#3a3a3a;font-weight:bold;letter-spacing:-0.3px">.0</span>
<span class="t rl" style="left:869px;top:160px;font-size:10.5px;color:#3a3a3a;font-weight:bold;letter-spacing:-0.3px">.00</span>
<span class="t rl" style="left:903px;top:147px;font-size:10.5px;color:#3a3a3a;font-weight:bold;letter-spacing:-0.3px">.00</span>
<svg style="left:898px;top:157px" width="11" height="10" viewBox="0 0 11 10"><path d="M10.2 5L5.7 0.8V3.2H1V6.8H5.7V9.2Z" fill="#7fd4f7" stroke="#2b9adb" stroke-width="1"/></svg>
<span class="t rl" style="left:909px;top:156px;font-size:10.5px;color:#3a3a3a;font-weight:bold;letter-spacing:-0.3px">.0</span>
<svg style="left:948px;top:114px" width="39" height="35" viewBox="0 0 39 35"><rect x="0.5" y="0.5" width="8.5" height="7.5" fill="#d6e9fb" stroke="#9cc1ea" stroke-width="0.7"/><rect x="9.0" y="0.5" width="8.5" height="7.5" fill="#f04a3c" stroke="#9cc1ea" stroke-width="0.7"/><rect x="17.5" y="0.5" width="8.5" height="7.5" fill="#eaf4fd" stroke="#9cc1ea" stroke-width="0.7"/><rect x="26.0" y="0.5" width="8.5" height="7.5" fill="#eaf4fd" stroke="#9cc1ea" stroke-width="0.7"/><rect x="0.5" y="8.0" width="8.5" height="7.5" fill="#d6e9fb" stroke="#9cc1ea" stroke-width="0.7"/><rect x="9.0" y="8.0" width="8.5" height="7.5" fill="#3f74e0" stroke="#9cc1ea" stroke-width="0.7"/><rect x="17.5" y="8.0" width="8.5" height="7.5" fill="#3f74e0" stroke="#9cc1ea" stroke-width="0.7"/><rect x="26.0" y="8.0" width="8.5" height="7.5" fill="#eaf4fd" stroke="#9cc1ea" stroke-width="0.7"/><rect x="0.5" y="15.5" width="8.5" height="7.5" fill="#d6e9fb" stroke="#9cc1ea" stroke-width="0.7"/><rect x="9.0" y="15.5" width="8.5" height="7.5" fill="#f04a3c" stroke="#9cc1ea" stroke-width="0.7"/><rect x="17.5" y="15.5" width="8.5" height="7.5" fill="#eaf4fd" stroke="#9cc1ea" stroke-width="0.7"/><rect x="26.0" y="15.5" width="8.5" height="7.5" fill="#eaf4fd" stroke="#9cc1ea" stroke-width="0.7"/><rect x="0.5" y="23.0" width="8.5" height="7.5" fill="#d6e9fb" stroke="#9cc1ea" stroke-width="0.7"/><rect x="9.0" y="23.0" width="8.5" height="7.5" fill="#3f74e0" stroke="#9cc1ea" stroke-width="0.7"/><rect x="17.5" y="23.0" width="8.5" height="7.5" fill="#eaf4fd" stroke="#9cc1ea" stroke-width="0.7"/><rect x="26.0" y="23.0" width="8.5" height="7.5" fill="#eaf4fd" stroke="#9cc1ea" stroke-width="0.7"/><rect x="18.5" y="17.5" width="19" height="15.5" rx="1.5" fill="#fff" stroke="#d2d2d2" stroke-width="0.9"/><text x="28" y="24.3" font-family="'DejaVu Sans',sans-serif" font-size="8.5" text-anchor="middle" fill="#333">≤≠</text><text x="28" y="31.3" font-family="'DejaVu Sans',sans-serif" font-size="8.5" text-anchor="middle" fill="#333">=&gt;</text></svg>
<svg style="left:987.5px;top:128.2px" width="8" height="5.5" viewBox="0 0 8 5.5"><path d="M0.5 0.5H7.5L4.0 5.0Z" fill="#5a5a5a"/></svg>
<span class="t rl" style="left:938.5px;top:150.3px;font-size:11.8px;color:#111;">Conditional</span>
<span class="t rl" style="left:941px;top:163px;font-size:11.8px;color:#111;">Formatting</span>
<div style="left:1010px;top:111px;width:170px;height:65px;background:#fff;border:1px solid #d4d4d4"></div>
<div style="left:1045px;top:116.5px;width:97px;height:24.5px;background:#fff;border:2px solid #98d79a;box-shadow:0 0 0 0.5px #bfe6c0"></div>
<span class="t rl" style="left:1050.5px;top:120.6px;font-size:11.3px;color:#333;">Normal</span>
<div style="left:1046px;top:147.5px;width:96px;height:23px;background:#fedfe5;border-radius:1px"></div>
<span class="t rl" style="left:1050.5px;top:151.4px;font-size:11.3px;color:#c9283e;">Bad</span>
<svg style="left:1154px;top:133px" width="20" height="20" viewBox="0 0 20 20"><circle cx="10" cy="10" r="9.2" fill="#fff" stroke="#c6c6c6" stroke-width="1"/><path d="M7.3 5.6L14 10L7.3 14.4Z" fill="#444"/></svg>
<svg style="left:1198px;top:116px" width="34" height="37" viewBox="0 0 34 37"><rect x="0.5" y="0.5" width="18" height="7" fill="#fbfdff" stroke="#a9bfe2" stroke-width="0.9"/><path d="M9.5 0.5V7.5" stroke="#a9bfe2" stroke-width="0.9"/><path d="M3 14L8 9.6V12.2H12V15.8H8V18.4Z" fill="#9be07a" stroke="#5cb83c" stroke-width="0.8"/><rect x="14.8" y="10" width="17.2" height="8" fill="#3f78dc" stroke="#6d9aee" stroke-width="0.9"/><path d="M23.4 10V18" stroke="#6d9aee" stroke-width="0.9"/><rect x="0.5" y="21.5" width="18" height="14" fill="#d7e8fa" stroke="#8fa9d6" stroke-width="0.9"/><path d="M9.5 21.5V35.5M0.5 28.5H18.5" stroke="#8fa9d6" stroke-width="0.9"/></svg>
<svg style="left:1237.5px;top:130.6px" width="8" height="5.5" viewBox="0 0 8 5.5"><path d="M0.5 0.5H7.5L4.0 5.0Z" fill="#5a5a5a"/></svg>
<span class="t rl" style="left:1203px;top:159px;font-size:11.8px;color:#111;">Insert</span>
<svg style="left:1255.5px;top:116px" width="37" height="37" viewBox="0 0 37 37"><rect x="0.5" y="0.5" width="18" height="7" fill="#fbfdff" stroke="#a9bfe2" stroke-width="0.9"/><path d="M9.5 0.5V7.5" stroke="#a9bfe2" stroke-width="0.9"/><rect x="19" y="10" width="16.5" height="8" fill="#fbfdff" stroke="#a9bfe2" stroke-width="0.9"/><path d="M27.25 10V18" stroke="#a9bfe2" stroke-width="0.9"/><rect x="0.5" y="21.5" width="18" height="14" fill="#d7e8fa" stroke="#8fa9d6" stroke-width="0.9"/><path d="M9.5 21.5V35.5M0.5 28.5H18.5" stroke="#8fa9d6" stroke-width="0.9"/><circle cx="14.5" cy="14.5" r="6.4" fill="#e2502c" stroke="#f0a38a" stroke-width="0.8"/><path d="M11.8 11.8L17.2 17.2M17.2 11.8L11.8 17.2" stroke="#fff" stroke-width="2.1" stroke-linecap="round"/></svg>
<svg style="left:1297.5px;top:130.6px" width="8" height="5.5" viewBox="0 0 8 5.5"><path d="M0.5 0.5H7.5L4.0 5.0Z" fill="#5a5a5a"/></svg>
<span class="t rl" style="left:1262px;top:159px;font-size:11.8px;color:#111;">Delete</span>
<svg style="left:1316.5px;top:114.5px" width="38" height="37" viewBox="0 0 38 37"><path d="M1.5 0.5V4.5M31.5 0.5V4.5" stroke="#555" stroke-width="0.9"/><path d="M2.5 2.5H8.5M24.5 2.5H30.5" stroke="#777" stroke-width="0.9" stroke-dasharray="1 1.2"/><path d="M9 2.5H24" stroke="#2f4f8f" stroke-width="1.3"/><path d="M8 2.5L11.5 0V5ZM25 2.5L21.5 0V5Z" fill="#2f4f8f"/><rect x="1.5" y="6.5" width="35" height="26" fill="#fbfdff" stroke="#d5dbe5" stroke-width="0.9"/><path d="M3.5 32.5V35.5H19.5V32.5" fill="#fdfdfd" stroke="#c9cfd9" stroke-width="0.9"/><path d="M10.5 6.5V32.5M22 6.5V32.5M31 6.5V32.5M1.5 12.5H36.5" stroke="#cfd8e6" stroke-width="0.8" stroke-dasharray="1.2 1"/><rect x="10.5" y="12.5" width="11.5" height="13.5" fill="#bcd6f5" stroke="#8eaede" stroke-width="0.9"/></svg>
<svg style="left:1356.5px;top:130.6px" width="8" height="5.5" viewBox="0 0 8 5.5"><path d="M0.5 0.5H7.5L4.0 5.0Z" fill="#5a5a5a"/></svg>
<span class="t rl" style="left:1320.5px;top:159px;font-size:11.8px;color:#111;">Format</span>
<svg style="left:1388px;top:118.5px" width="37" height="30" viewBox="0 0 37 30"><path d="M0.5 0.5H27.5L35.5 8.5V29H0.5Z" fill="#fff" stroke="#c4c4c4" stroke-width="0.9"/><path d="M27.5 0.5V8.5H35.5" fill="#f1f1f1" stroke="#c4c4c4" stroke-width="0.8"/><text x="3" y="15.3" font-family="'Liberation Serif',serif" font-size="15.5" fill="#4a66a8">Aa</text><path d="M4 18H32" stroke="#d9e2ee" stroke-width="0.8" stroke-dasharray="1.5 1"/><rect x="3.0" y="21" width="4.8" height="4.8" rx="1.2" fill="#6aa5e8"/><rect x="9.1" y="21" width="4.8" height="4.8" rx="1.2" fill="#e0605c"/><rect x="15.2" y="21" width="4.8" height="4.8" rx="1.2" fill="#a6d86a"/><rect x="21.299999999999997" y="21" width="4.8" height="4.8" rx="1.2" fill="#b57ad8"/><rect x="27.4" y="21" width="4.8" height="4.8" rx="1.2" fill="#f2a65a"/></svg>
<svg style="left:1426.5px;top:130.8px" width="8" height="5.5" viewBox="0 0 8 5.5"><path d="M0.5 0.5H7.5L4.0 5.0Z" fill="#5a5a5a"/></svg>
<span class="t rl" style="left:1388.5px;top:159px;font-size:11.8px;color:#111;">Themes</span>
<svg style="left:1450.5px;top:114px" width="23" height="23" viewBox="0 0 23 23"><rect x="0.5" y="0.5" width="9.5" height="9.5" rx="1" fill="#5f9fe0" /><rect x="1.3" y="1.3" width="7.9" height="4" rx="0.8" fill="#8ec1f2"/><rect x="12.5" y="0.5" width="9.5" height="9.5" rx="1" fill="#e0555a" /><rect x="13.3" y="1.3" width="7.9" height="4" rx="0.8" fill="#f28a8a"/><rect x="0.5" y="12.5" width="9.5" height="9.5" rx="1" fill="#9bd66a" /><rect x="1.3" y="13.3" width="7.9" height="4" rx="0.8" fill="#c2ee98"/><rect x="12.5" y="12.5" width="9.5" height="9.5" rx="1" fill="#c070e0" /><rect x="13.3" y="13.3" width="7.9" height="4" rx="0.8" fill="#e0a0f4"/></svg>
<svg style="left:1475.5px;top:122.2px" width="8" height="5.5" viewBox="0 0 8 5.5"><path d="M0.5 0.5H7.5L4.0 5.0Z" fill="#5a5a5a"/></svg>
<span class="t rl" style="left:1449.5px;top:147.5px;font-size:21.5px;color:#4a66a8;font-family:'Liberation Serif',serif;letter-spacing:-0.5px">Aa</span>
<svg style="left:1475.5px;top:156.2px" width="8" height="5.5" viewBox="0 0 8 5.5"><path d="M0.5 0.5H7.5L4.0 5.0Z" fill="#5a5a5a"/></svg>
<div id="fbar">
<div style="left:0;top:20px;width:1600px;height:1px;background:#c6c6c6"></div>
<span class="t" style="left:22px;width:100px;text-align:center;top:5px;font-size:12.5px;color:#000">B17</span>
<div style="left:140px;top:1px;width:1px;height:19px;background:#dcdcdc"></div>
<div style="left:161px;top:1px;width:1px;height:19px;background:#dcdcdc"></div>
<svg style="left:146px;top:5px" width="9" height="13" viewBox="0 0 9 13"><path d="M4.5 0.3L7.6 4.6H1.4Z M4.5 12.4L7.6 8.1H1.4Z" fill="#222"/></svg>
<svg style="left:174px;top:3px" width="17" height="17" viewBox="0 0 17 17"><circle cx="8.5" cy="8.5" r="7.6" fill="#b9b9b9"/><path d="M5.3 5.3L11.7 11.7M11.7 5.3L5.3 11.7" stroke="#fff" stroke-width="2.6" stroke-linecap="round"/></svg>
<svg style="left:202px;top:3px" width="17" height="17" viewBox="0 0 17 17"><circle cx="8.5" cy="8.5" r="7.6" fill="#b9b9b9"/><path d="M4.6 8.6L7.6 11.6L12.6 5.4" fill="none" stroke="#fff" stroke-width="2.6" stroke-linecap="round" stroke-linejoin="round"/></svg>
<div style="left:231px;top:0px;width:52px;height:21px;border:1px solid #cfcfcf;border-right:1px solid #bdbdbd;border-radius:10px 0 0 10px;background:#fff"></div>
<div style="left:238px;top:5px;width:10px;height:5px;border-radius:5px 5px 0 0;background:#c9c9c9"></div>
<span class="t" style="left:261px;top:2px;font-family:'Liberation Serif',serif;font-style:italic;font-weight:bold;font-size:16.5px;color:#333;-webkit-text-stroke:0.4px #333">fx</span>
<div style="left:1582px;top:0;width:1px;height:24px;background:#b5b5b5"></div>
<svg style="left:1587px;top:8px" width="10" height="6" viewBox="0 0 10 6"><path d="M0 0H10L5 6Z" fill="#222"/></svg>
</div>
<div id="colhdr">
<div class="ch" style="left:0;width:35px"><svg style="left:19px;top:3px" width="14" height="12" viewBox="0 0 14 12"><path d="M12.5 1V10.5H1" fill="none" stroke="#b5b5b5" stroke-width="1.2"/><path d="M13.5 0.5V11.5H0.5" fill="none" stroke="#e3e3e3" stroke-width="1"/></svg></div>
<div class="ch" style="left:35px;width:79px"><span class="t" style="left:0;width:79px;text-align:center;top:1px">A</span></div>
<div class="ch sel" style="left:114px;width:79px"><span class="t" style="left:0;width:79px;text-align:center;top:1px">B</span></div>
<div class="ch" style="left:193px;width:79px"><span class="t" style="left:0;width:79px;text-align:center;top:1px">C</span></div>
<div class="ch" style="left:272px;width:79px"><span class="t" style="left:0;width:79px;text-align:center;top:1px">D</span></div>
<div class="ch" style="left:351px;width:79px"><span class="t" style="left:0;width:79px;text-align:center;top:1px">E</span></div>
<div class="ch" style="left:430px;width:79px"><span class="t" style="left:0;width:79px;text-align:center;top:1px">F</span></div>
<div class="ch" style="left:509px;width:78px"><span class="t" style="left:0;width:78px;text-align:center;top:1px">G</span></div>
<div class="ch" style="left:587px;width:79px"><span class="t" style="left:0;width:79px;text-align:center;top:1px">H</span></div>
<div class="ch" style="left:666px;width:79px"><span class="t" style="left:0;width:79px;text-align:center;top:1px">I</span></div>
<div class="ch" style="left:745px;width:79px"><span class="t" style="left:0;width:79px;text-align:center;top:1px">J</span></div>
<div class="ch" style="left:824px;width:79px"><span class="t" style="left:0;width:79px;text-align:center;top:1px">K</span></div>
<div class="ch" style="left:903px;width:79px"><span class="t" style="left:0;width:79px;text-align:center;top:1px">L</span></div>
<div class="ch" style="left:982px;width:79px"><span class="t" style="left:0;width:79px;text-align:center;top:1px">M</span></div>
<div class="ch" style="left:1061px;width:79px"><span class="t" style="left:0;width:79px;text-align:center;top:1px">N</span></div>
<div class="ch" style="left:1140px;width:78px"><span class="t" style="left:0;width:78px;text-align:center;top:1px">O</span></div>
<div class="ch" style="left:1218px;width:79px"><span class="t" style="left:0;width:79px;text-align:center;top:1px">P</span></div>
<div class="ch" style="left:1297px;width:79px"><span class="t" style="left:0;width:79px;text-align:center;top:1px">Q</span></div>
<div class="ch" style="left:1376px;width:79px"><span class="t" style="left:0;width:79px;text-align:center;top:1px">R</span></div>
<div class="ch" style="left:1455px;width:79px"><span class="t" style="left:0;width:79px;text-align:center;top:1px">S</span></div>
<div class="ch" style="left:1534px;width:79px"><span class="t" style="left:0;width:79px;text-align:center;top:1px">T</span></div>
</div>
<div id="rowhdr">
<div class="rh" style="top:0px;height:18px"><span class="t" style="left:0;width:33px;text-align:center;top:3px">1</span></div>
<div class="rh" style="top:18px;height:18px"><span class="t" style="left:0;width:33px;text-align:center;top:3px">2</span></div>
<div class="rh" style="top:36px;height:19px"><span class="t" style="left:0;width:33px;text-align:center;top:3px">3</span></div>
<div class="rh" style="top:55px;height:18px"><span class="t" style="left:0;width:33px;text-align:center;top:2px">4</span></div>
<div class="rh" style="top:73px;height:18px"><span class="t" style="left:0;width:33px;text-align:center;top:2px">5</span></div>
<div class="rh" style="top:91px;height:18px"><span class="t" style="left:0;width:33px;text-align:center;top:3px">6</span></div>
<div class="rh" style="top:109px;height:18px"><span class="t" style="left:0;width:33px;text-align:center;top:3px">7</span></div>
<div class="rh" style="top:127px;height:19px"><span class="t" style="left:0;width:33px;text-align:center;top:3px">8</span></div>
<div class="rh" style="top:146px;height:18px"><span class="t" style="left:0;width:33px;text-align:center;top:2px">9</span></div>
<div class="rh" style="top:164px;height:18px"><span class="t" style="left:0;width:33px;text-align:center;top:2px">10</span></div>
<div class="rh" style="top:182px;height:18px"><span class="t" style="left:0;width:33px;text-align:center;top:3px">11</span></div>
<div class="rh" style="top:200px;height:18px"><span class="t" style="left:0;width:33px;text-align:center;top:3px">12</span></div>
<div class="rh" style="top:218px;height:19px"><span class="t" style="left:0;width:33px;text-align:center;top:3px">13</span></div>
<div class="rh" style="top:237px;height:18px"><span class="t" style="left:0;width:33px;text-align:center;top:2px">14</span></div>
<div class="rh" style="top:255px;height:18px"><span class="t" style="left:0;width:33px;text-align:center;top:2px">15</span></div>
<div class="rh" style="top:273px;height:18px"><span class="t" style="left:0;width:33px;text-align:center;top:3px">16</span></div>
<div class="rh sel" style="top:291px;height:18px"><span class="t" style="left:0;width:33px;text-align:center;top:3px">17</span></div>
<div class="rh" style="top:309px;height:19px"><span class="t" style="left:0;width:33px;text-align:center;top:3px">18</span></div>
<div class="rh" style="top:328px;height:18px"><span class="t" style="left:0;width:33px;text-align:center;top:2px">19</span></div>
<div class="rh" style="top:346px;height:18px"><span class="t" style="left:0;width:33px;text-align:center;top:3px">20</span></div>
<div class="rh" style="top:364px;height:18px"><span class="t" style="left:0;width:33px;text-align:center;top:3px">21</span></div>
<div class="rh" style="top:382px;height:18px"><span class="t" style="left:0;width:33px;text-align:center;top:3px">22</span></div>
<div class="rh" style="top:400px;height:19px"><span class="t" style="left:0;width:33px;text-align:center;top:3px">23</span></div>
<div class="rh" style="top:419px;height:18px"><span class="t" style="left:0;width:33px;text-align:center;top:2px">24</span></div>
<div class="rh" style="top:437px;height:18px"><span class="t" style="left:0;width:33px;text-align:center;top:3px">25</span></div>
<div class="rh" style="top:455px;height:18px"><span class="t" style="left:0;width:33px;text-align:center;top:3px">26</span></div>
<div class="rh" style="top:473px;height:18px"><span class="t" style="left:0;width:33px;text-align:center;top:3px">27</span></div>
<div class="rh" style="top:491px;height:19px"><span class="t" style="left:0;width:33px;text-align:center;top:3px">28</span></div>
<div class="rh" style="top:510px;height:18px"><span class="t" style="left:0;width:33px;text-align:center;top:2px">29</span></div>
<div class="rh" style="top:528px;height:18px"><span class="t" style="left:0;width:33px;text-align:center;top:3px">30</span></div>
<div class="rh" style="top:546px;height:18px"><span class="t" style="left:0;width:33px;text-align:center;top:3px">31</span></div>
<div class="rh" style="top:564px;height:19px"><span class="t" style="left:0;width:33px;text-align:center;top:3px">32</span></div>
<div class="rh" style="top:583px;height:18px"><span class="t" style="left:0;width:33px;text-align:center;top:2px">33</span></div>
<div class="rh" style="top:601px;height:18px"><span class="t" style="left:0;width:33px;text-align:center;top:2px">34</span></div>
<div class="rh" style="top:619px;height:18px"><span class="t" style="left:0;width:33px;text-align:center;top:3px">35</span></div>
<div class="rh" style="top:637px;height:18px"><span class="t" style="left:0;width:33px;text-align:center;top:3px">36</span></div>
<div class="rh" style="top:655px;height:19px"><span class="t" style="left:0;width:33px;text-align:center;top:3px">37</span></div>
<div class="rh" style="top:674px;height:18px"><span class="t" style="left:0;width:33px;text-align:center;top:2px">38</span></div>
<div class="rh" style="top:692px;height:18px"><span class="t" style="left:0;width:33px;text-align:center;top:2px">39</span></div>
<div class="rh" style="top:710px;height:18px"><span class="t" style="left:0;width:33px;text-align:center;top:3px">40</span></div>
<div class="rh" style="top:728px;height:18px"><span class="t" style="left:0;width:33px;text-align:center;top:3px">41</span></div>
<div class="rh" style="top:746px;height:19px"><span class="t" style="left:0;width:33px;text-align:center;top:3px">42</span></div>
<div class="rh" style="top:765px;height:18px"><span class="t" style="left:0;width:33px;text-align:center;top:2px">43</span></div>
<div class="rh" style="top:783px;height:18px"><span class="t" style="left:0;width:33px;text-align:center;top:3px">44</span></div>
<div class="rh" style="top:801px;height:18px"><span class="t" style="left:0;width:33px;text-align:center;top:3px">45</span></div>
<div class="rh" style="top:819px;height:18px"><span class="t" style="left:0;width:33px;text-align:center;top:3px">46</span></div>
<div class="rh" style="top:837px;height:19px"><span class="t" style="left:0;width:33px;text-align:center;top:3px">47</span></div>
<div class="rh" style="top:856px;height:18px"><span class="t" style="left:0;width:33px;text-align:center;top:2px">48</span></div>
<div class="rh" style="top:874px;height:18px"><span class="t" style="left:0;width:33px;text-align:center;top:3px">49</span></div>
<div class="rh" style="top:892px;height:18px"><span class="t" style="left:0;width:33px;text-align:center;top:3px">50</span></div>
<div class="rh" style="top:910px;height:18px"><span class="t" style="left:0;width:33px;text-align:center;top:3px">51</span></div>
<div class="rh" style="top:928px;height:19px"><span class="t" style="left:0;width:33px;text-align:center;top:3px">52</span></div>
<div class="rh" style="top:947px;height:18px"><span class="t" style="left:0;width:33px;text-align:center;top:2px">53</span></div>
<div class="rh" style="top:965px;height:18px"><span class="t" style="left:0;width:33px;text-align:center;top:3px">54</span></div>
<div class="rh" style="top:983px;height:18px"><span class="t" style="left:0;width:33px;text-align:center;top:3px">55</span></div>
<div class="rh" style="top:1001px;height:18px"><span class="t" style="left:0;width:33px;text-align:center;top:3px">56</span></div>
</div>
<div id="grid">
<div class="vl" style="left:78px"></div>
<div class="vl" style="left:157px"></div>
<div class="vl" style="left:236px"></div>
<div class="vl" style="left:315px"></div>
<div class="vl" style="left:394px"></div>
<div class="vl" style="left:473px"></div>
<div class="vl" style="left:551px"></div>
<div class="vl" style="left:630px"></div>
<div class="vl" style="left:709px"></div>
<div class="vl" style="left:788px"></div>
<div class="vl" style="left:867px"></div>
<div class="vl" style="left:946px"></div>
<div class="vl" style="left:1025px"></div>
<div class="vl" style="left:1104px"></div>
<div class="vl" style="left:1182px"></div>
<div class="vl" style="left:1261px"></div>
<div class="vl" style="left:1340px"></div>
<div class="vl" style="left:1419px"></div>
<div class="vl" style="left:1498px"></div>
<div class="vl" style="left:1577px"></div>
<div class="hl" style="top:17px"></div>
<div class="hl" style="top:35px"></div>
<div class="hl" style="top:54px"></div>
<div class="hl" style="top:72px"></div>
<div class="hl" style="top:90px"></div>
<div class="hl" style="top:108px"></div>
<div class="hl" style="top:126px"></div>
<div class="hl" style="top:145px"></div>
<div class="hl" style="top:163px"></div>
<div class="hl" style="top:181px"></div>
<div class="hl" style="top:199px"></div>
<div class="hl" style="top:217px"></div>
<div class="hl" style="top:236px"></div>
<div class="hl" style="top:254px"></div>
<div class="hl" style="top:272px"></div>
<div class="hl" style="top:290px"></div>
<div class="hl" style="top:308px"></div>
<div class="hl" style="top:327px"></div>
<div class="hl" style="top:345px"></div>
<div class="hl" style="top:363px"></div>
<div class="hl" style="top:381px"></div>
<div class="hl" style="top:399px"></div>
<div class="hl" style="top:418px"></div>
<div class="hl" style="top:436px"></div>
<div class="hl" style="top:454px"></div>
<div class="hl" style="top:472px"></div>
<div class="hl" style="top:490px"></div>
<div class="hl" style="top:509px"></div>
<div class="hl" style="top:527px"></div>
<div class="hl" style="top:545px"></div>
<div class="hl" style="top:563px"></div>
<div class="hl" style="top:582px"></div>
<div class="hl" style="top:600px"></div>
<div class="hl" style="top:618px"></div>
<div class="hl" style="top:636px"></div>
<div class="hl" style="top:654px"></div>
<div class="hl" style="top:673px"></div>
<div class="hl" style="top:691px"></div>
<div class="hl" style="top:709px"></div>
<div class="hl" style="top:727px"></div>
<div class="hl" style="top:745px"></div>
<div class="hl" style="top:764px"></div>
<div class="hl" style="top:782px"></div>
<div class="hl" style="top:800px"></div>
<div class="hl" style="top:818px"></div>
<div class="hl" style="top:836px"></div>
<div class="hl" style="top:855px"></div>
<div class="hl" style="top:873px"></div>
<div class="hl" style="top:891px"></div>
<div class="hl" style="top:909px"></div>
<div class="hl" style="top:927px"></div>
<div class="hl" style="top:946px"></div>
<div class="hl" style="top:964px"></div>
<div class="hl" style="top:982px"></div>
<div class="hl" style="top:1000px"></div>
<div class="hl" style="top:1018px"></div>
<span class="c" style="left:3px;top:2px;background:#fff;height:14px">System Report</span>
<span class="c" style="left:3px;top:20px;background:#fff;height:14px">Series</span>
<span class="c" style="left:82px;top:20px;background:#fff;height:14px">Flagged</span>
<span class="c" style="left:161px;top:20px;background:#fff;height:14px">Take-Down</span>
<span class="c" style="left:240px;top:20px;background:#fff;height:14px">Dungeon</span>
<span class="c" style="left:3px;top:38px;background:#fff;height:14px">john</span>
<span class="c" style="left:79px;width:76px;text-align:right;margin-left:-1px;top:38px">24</span>
<span class="c" style="left:158px;width:76px;text-align:right;margin-left:-1px;top:38px">17</span>
<span class="c" style="left:237px;width:76px;text-align:right;margin-left:-1px;top:38px">16</span>
<span class="c" style="left:3px;top:56px;background:#fff;height:14px">nick</span>
<span class="c" style="left:79px;width:76px;text-align:right;margin-left:-1px;top:56px">52</span>
<span class="c" style="left:158px;width:76px;text-align:right;margin-left:-1px;top:56px">33</span>
<span class="c" style="left:237px;width:76px;text-align:right;margin-left:-1px;top:56px">17</span>
<span class="c" style="left:3px;top:74px;background:#fff;height:14px">colette</span>
<span class="c" style="left:79px;width:76px;text-align:right;margin-left:-1px;top:74px">26</span>
<span class="c" style="left:158px;width:76px;text-align:right;margin-left:-1px;top:74px">91</span>
<span class="c" style="left:237px;width:76px;text-align:right;margin-left:-1px;top:74px">18</span>
<span class="c" style="left:3px;top:93px;background:#fff;height:14px">jermain</span>
<span class="c" style="left:79px;width:76px;text-align:right;margin-left:-1px;top:93px">83</span>
<span class="c" style="left:158px;width:76px;text-align:right;margin-left:-1px;top:93px">2</span>
<span class="c" style="left:237px;width:76px;text-align:right;margin-left:-1px;top:93px">71</span>
<div style="left:78px;top:290px;width:80.5px;height:20px;border:2px solid #4f7cc6;box-shadow:inset 0 0 0 1px #d3def0"></div>
<div style="left:153.5px;top:305.5px;width:7px;height:7px;background:linear-gradient(#a5d6f7,#6fb4ee);border:1px solid #5a92d8;box-shadow:0 0 0 0.5px #fff"></div>
</div>
<svg id="chart" style="left:420px;top:270px" width="1080" height="840" viewBox="420 270 1080 840" font-family="'DejaVu Serif','Liberation Serif',serif">
<rect x="428.6" y="276.5" width="1061" height="823" fill="#fff" stroke="#262626" stroke-width="1.5"/>
<rect x="572.5" y="369.0" width="780.5" height="670.5" fill="#e8e8e8" stroke="#9c9c9c" stroke-width="1"/>
<line x1="728.6" y1="369.0" x2="728.6" y2="1039.5" stroke="#1a1a1a" stroke-width="1.3"/>
<line x1="884.7" y1="369.0" x2="884.7" y2="1039.5" stroke="#1a1a1a" stroke-width="1.3"/>
<line x1="1040.8" y1="369.0" x2="1040.8" y2="1039.5" stroke="#1a1a1a" stroke-width="1.3"/>
<line x1="1196.9" y1="369.0" x2="1196.9" y2="1039.5" stroke="#1a1a1a" stroke-width="1.3"/>
<rect x="572.5" y="399.6" width="554.2" height="40.6" fill="#6cfa79" stroke="#1a1a1a" stroke-width="1.1"/>
<rect x="572.5" y="440.2" width="140.5" height="40.6" fill="#ffffb3" stroke="#1a1a1a" stroke-width="1.1"/>
<rect x="572.5" y="480.8" width="132.7" height="40.6" fill="#fe4747" stroke="#1a1a1a" stroke-width="1.1"/>
<rect x="572.5" y="521.4" width="124.9" height="40.6" fill="#86d7ff" stroke="#1a1a1a" stroke-width="1.1"/>
<rect x="572.5" y="623.0" width="15.6" height="40.6" fill="#6cfa79" stroke="#1a1a1a" stroke-width="1.1"/>
<rect x="572.5" y="663.6" width="710.3" height="40.6" fill="#ffffb3" stroke="#1a1a1a" stroke-width="1.1"/>
<rect x="572.5" y="704.2" width="257.6" height="40.6" fill="#fe4747" stroke="#1a1a1a" stroke-width="1.1"/>
<rect x="572.5" y="744.8" width="132.7" height="40.6" fill="#86d7ff" stroke="#1a1a1a" stroke-width="1.1"/>
<rect x="572.5" y="846.5" width="647.8" height="40.6" fill="#6cfa79" stroke="#1a1a1a" stroke-width="1.1"/>
<rect x="572.5" y="887.1" width="202.9" height="40.6" fill="#ffffb3" stroke="#1a1a1a" stroke-width="1.1"/>
<rect x="572.5" y="927.8" width="405.9" height="40.6" fill="#fe4747" stroke="#1a1a1a" stroke-width="1.1"/>
<rect x="572.5" y="968.3" width="187.3" height="40.6" fill="#86d7ff" stroke="#1a1a1a" stroke-width="1.1"/>
<path d="M572.5 369.0V1047.0 M572.0 1039.5H1353.0 M564.5 369.0H572.5 M564.5 592.5H572.5 M564.5 816.0H572.5 M564.5 1039.5H572.5 M728.6 1039.5v7.5 M884.7 1039.5v7.5 M1040.8 1039.5v7.5 M1196.9 1039.5v7.5 M1353.0 1039.5v7.5" fill="none" stroke="#1c1c1c" stroke-width="1.15"/>
<text x="564.7" y="1079.5" textLength="15.6" lengthAdjust="spacingAndGlyphs" font-weight="bold" font-size="22.7" fill="#000">0</text>
<text x="713.8" y="1079.5" textLength="29.6" lengthAdjust="spacingAndGlyphs" font-weight="bold" font-size="22.7" fill="#000">20</text>
<text x="869.9" y="1079.5" textLength="29.6" lengthAdjust="spacingAndGlyphs" font-weight="bold" font-size="22.7" fill="#000">40</text>
<text x="1026.0" y="1079.5" textLength="29.6" lengthAdjust="spacingAndGlyphs" font-weight="bold" font-size="22.7" fill="#000">60</text>
<text x="1182.1" y="1079.5" textLength="29.6" lengthAdjust="spacingAndGlyphs" font-weight="bold" font-size="22.7" fill="#000">80</text>
<text x="1330.2" y="1079.5" textLength="45.6" lengthAdjust="spacingAndGlyphs" font-weight="bold" font-size="22.7" fill="#000">100</text>
<text x="450.8" y="490.2" textLength="98.5" lengthAdjust="spacingAndGlyphs" font-weight="bold" font-size="21.6" fill="#000">Dungeon</text>
<text x="486.3" y="699" textLength="63" lengthAdjust="spacingAndGlyphs" font-weight="bold" font-size="21.6" fill="#000">Take-</text>
<text x="485.5" y="728.5" textLength="63.8" lengthAdjust="spacingAndGlyphs" font-weight="bold" font-size="21.6" fill="#000">Down</text>
<text x="464.5" y="937.5" textLength="84.8" lengthAdjust="spacingAndGlyphs" font-weight="bold" font-size="21.6" fill="#000">Flagged</text>
<text x="810" y="326" textLength="186.5" lengthAdjust="spacingAndGlyphs" font-family="'Liberation Sans',sans-serif" font-weight="bold" font-size="25.6" fill="#000">Sensor Analysis</text>
<rect x="1384.7" y="644.3" width="98.6" height="119.8" fill="#fff" stroke="#111" stroke-width="1.1"/>
<rect x="1392.4" y="653.3" width="12.4" height="12.4" fill="#6cfa79" stroke="#111" stroke-width="1"/>
<text x="1410" y="668.2" font-family="'Liberation Sans',sans-serif" font-size="21.1" fill="#000" stroke="#000" stroke-width="0.3">jermain</text>
<rect x="1392.4" y="683.1" width="12.4" height="12.4" fill="#ffffb3" stroke="#111" stroke-width="1"/>
<text x="1410" y="698.0" font-family="'Liberation Sans',sans-serif" font-size="21.1" fill="#000" stroke="#000" stroke-width="0.3">colette</text>
<rect x="1392.4" y="713.0" width="12.4" height="12.4" fill="#fe4747" stroke="#111" stroke-width="1"/>
<text x="1410" y="727.9" font-family="'Liberation Sans',sans-serif" font-size="21.1" fill="#000" stroke="#000" stroke-width="0.3">nick</text>
<rect x="1392.4" y="742.8" width="12.4" height="12.4" fill="#86d7ff" stroke="#111" stroke-width="1"/>
<text x="1410" y="757.7" font-family="'Liberation Sans',sans-serif" font-size="21.1" fill="#000" stroke="#000" stroke-width="0.3">john</text>
</svg>
<div id="vscroll" style="left:1582px;top:204px;width:18px;height:1049px;background:#fff;border-left:1px solid #ababab">
<div style="left:0;top:0;width:17px;height:17px;border-bottom:1px solid #c9c9c9;border-top:1px solid #b5b5b5"></div>
<div style="left:3px;top:6px;width:10px;height:1px;background:#bdbdbd"></div>
<div style="left:3px;top:9px;width:10px;height:1px;background:#bdbdbd"></div>
<div style="left:5px;top:17px;width:9px;height:528px;border-radius:4.5px;background:#e1e1e1"></div>
</div>
<div id="tabbar" style="left:0;top:1232px;width:1582px;height:21px;background:#a4b5d5;border-top:1px solid #a9a9a9;border-bottom:1px solid #8f8f8f">
<div style="left:0;top:0;width:80px;height:21px;background:#fcfcfc"></div>
<div style="left:80px;top:0;width:80px;height:19px;background:#fdfdfd;border-left:1px solid #cfcfcf"></div>
<svg style="left:88px;top:3px" width="66" height="12" viewBox="0 0 66 12"><g fill="#b8b8b8"><path d="M2 1.5h1.4v9H2z M10 1.8v8.4L3.6 6z"/><path d="M26 1.8v8.4L19.6 6z"/><path d="M37 1.8v8.4L43.4 6z"/><path d="M53 1.8v8.4L59.4 6z M60 1.5h1.4v9H60z"/></g></svg>
<svg style="left:172px;top:0" width="98" height="20" viewBox="0 0 98 20"><path d="M66.5 0H93.5V10.5Q93.5 12 92.3 13.2L88.3 17.2Q87 18.5 85 18.5H71Q66.5 18.5 66.5 14Z" fill="#fdfdfd" stroke="#8d98ad" stroke-width="1"/><path d="M3.5 0H65.5V10.5Q65.5 12 64.3 13.2L59.5 17.5Q58.3 18.5 56.5 18.5H8Q3.5 18.5 3.5 14Z" fill="#fff" stroke="#8d98ad" stroke-width="1"/><path d="M74.3 9.3h9.4M79 4.6v9.4" stroke="#3c3c3c" stroke-width="2"/></svg>
<span class="t" style="left:186px;top:2px;font-family:'Liberation Sans',sans-serif;font-weight:bold;font-size:12.4px;color:#000">Sheet1</span>
<div style="left:841px;top:0;width:741px;height:19px;background:#fcfcfc;border-left:2px solid #e9e9e9"></div>
<div style="left:850px;top:5px;width:356px;height:10px;border-radius:5px;background:#e3e3e3"></div>
<div style="left:1567px;top:0;width:15px;height:19px;border-left:1px solid #b5b5b5;background:#fdfdfd"></div>
<div style="left:1572px;top:5px;width:1px;height:10px;background:#9a9a9a"></div>
<div style="left:1576px;top:5px;width:1px;height:10px;background:#9a9a9a"></div>
</div>
<div id="status" style="left:0;top:1253px;width:1600px;height:23px;background:#fdfdfd">
<div style="left:0;top:0;width:80px;height:23px;background:#fcfcfc"></div>
<div style="left:80px;top:0;width:1px;height:22px;background:#c9c9c9"></div>
<div style="left:192px;top:0;width:1px;height:22px;background:#c9c9c9"></div>
<div style="left:841px;top:0;width:1px;height:22px;background:#c9c9c9"></div>
<div style="left:1010px;top:0;width:1px;height:22px;background:#c9c9c9"></div>
<div style="left:1053px;top:0;width:1px;height:22px;background:#c9c9c9"></div>
<div style="left:1095px;top:0;width:1px;height:22px;background:#c9c9c9"></div>
<span class="t rl" style="left:84px;top:5px;font-size:11.8px;color:#111">Normal View</span>
<span class="t rl" style="left:200.5px;top:5px;font-size:11.5px;color:#111">Ready</span>
<span class="t rl" style="left:846px;top:5px;font-size:11.8px;color:#111">Sum=0</span>
<svg style="left:992px;top:8px" width="13" height="8" viewBox="0 0 13 8"><path d="M0.5 0.5H12.5L6.5 7.5Z" fill="#111"/></svg>
<svg style="left:1584px;top:6px" width="16" height="16" viewBox="0 0 16 16"><path d="M4 15L15 4M8 15L15 8M12 15L15 12" stroke="#9a9a9a" stroke-width="1.2"/></svg>
<div style="left:0;top:22px;width:1600px;height:1px;background:#777"></div><div style="left:0;top:21.5px;width:1456px;height:1.5px;background:#333"></div>
</div>
<div id="viewbtn" style="left:4px;top:1238px;width:71px;height:29px;border-radius:5px;background:#fcfcfc;border:1px solid #9e9e9e;overflow:hidden;box-shadow:0 1px 0 rgba(255,255,255,.8)">
<div style="left:-1px;top:-1px;width:36px;height:29px;background:linear-gradient(#5d5d5d,#777 60%,#858585);box-shadow:inset 0 1px 3px rgba(0,0,0,.6)"></div>
<svg style="left:8.5px;top:6.5px" width="18.5" height="14" viewBox="0 0 20 15"><rect x="0.5" y="0.5" width="19" height="14" rx="1.5" fill="#2f7fd0" stroke="#cfe6fb"/><path d="M0.5 5H19.5M0.5 9.5H19.5M5.2 0.5V14.5M10 0.5V14.5M14.8 0.5V14.5" stroke="#bfe0fa" stroke-width="1"/></svg>
<svg style="left:40px;top:6px" width="26" height="15" viewBox="0 0 26 15"><g fill="#fff" stroke="#555" stroke-width="1.2"><rect x="0.8" y="0.8" width="10" height="13.4" rx="1"/><rect x="14.2" y="0.8" width="10" height="13.4" rx="1"/></g><g fill="#444"><rect x="3" y="3" width="2.2" height="2.2"/><rect x="6.6" y="3" width="2.2" height="2.2"/><rect x="3" y="6.4" width="2.2" height="2.2"/><rect x="6.6" y="6.4" width="2.2" height="2.2"/><rect x="3" y="9.8" width="2.2" height="2.2"/><rect x="6.6" y="9.8" width="2.2" height="2.2"/><rect x="16.4" y="3" width="2.2" height="2.2"/><rect x="20" y="3" width="2.2" height="2.2"/><rect x="16.4" y="6.4" width="2.2" height="2.2"/><rect x="20" y="6.4" width="2.2" height="2.2"/><rect x="16.4" y="9.8" width="2.2" height="2.2"/><rect x="20" y="9.8" width="2.2" height="2.2"/></g></svg>
</div>
</div>
</body>
</html>
